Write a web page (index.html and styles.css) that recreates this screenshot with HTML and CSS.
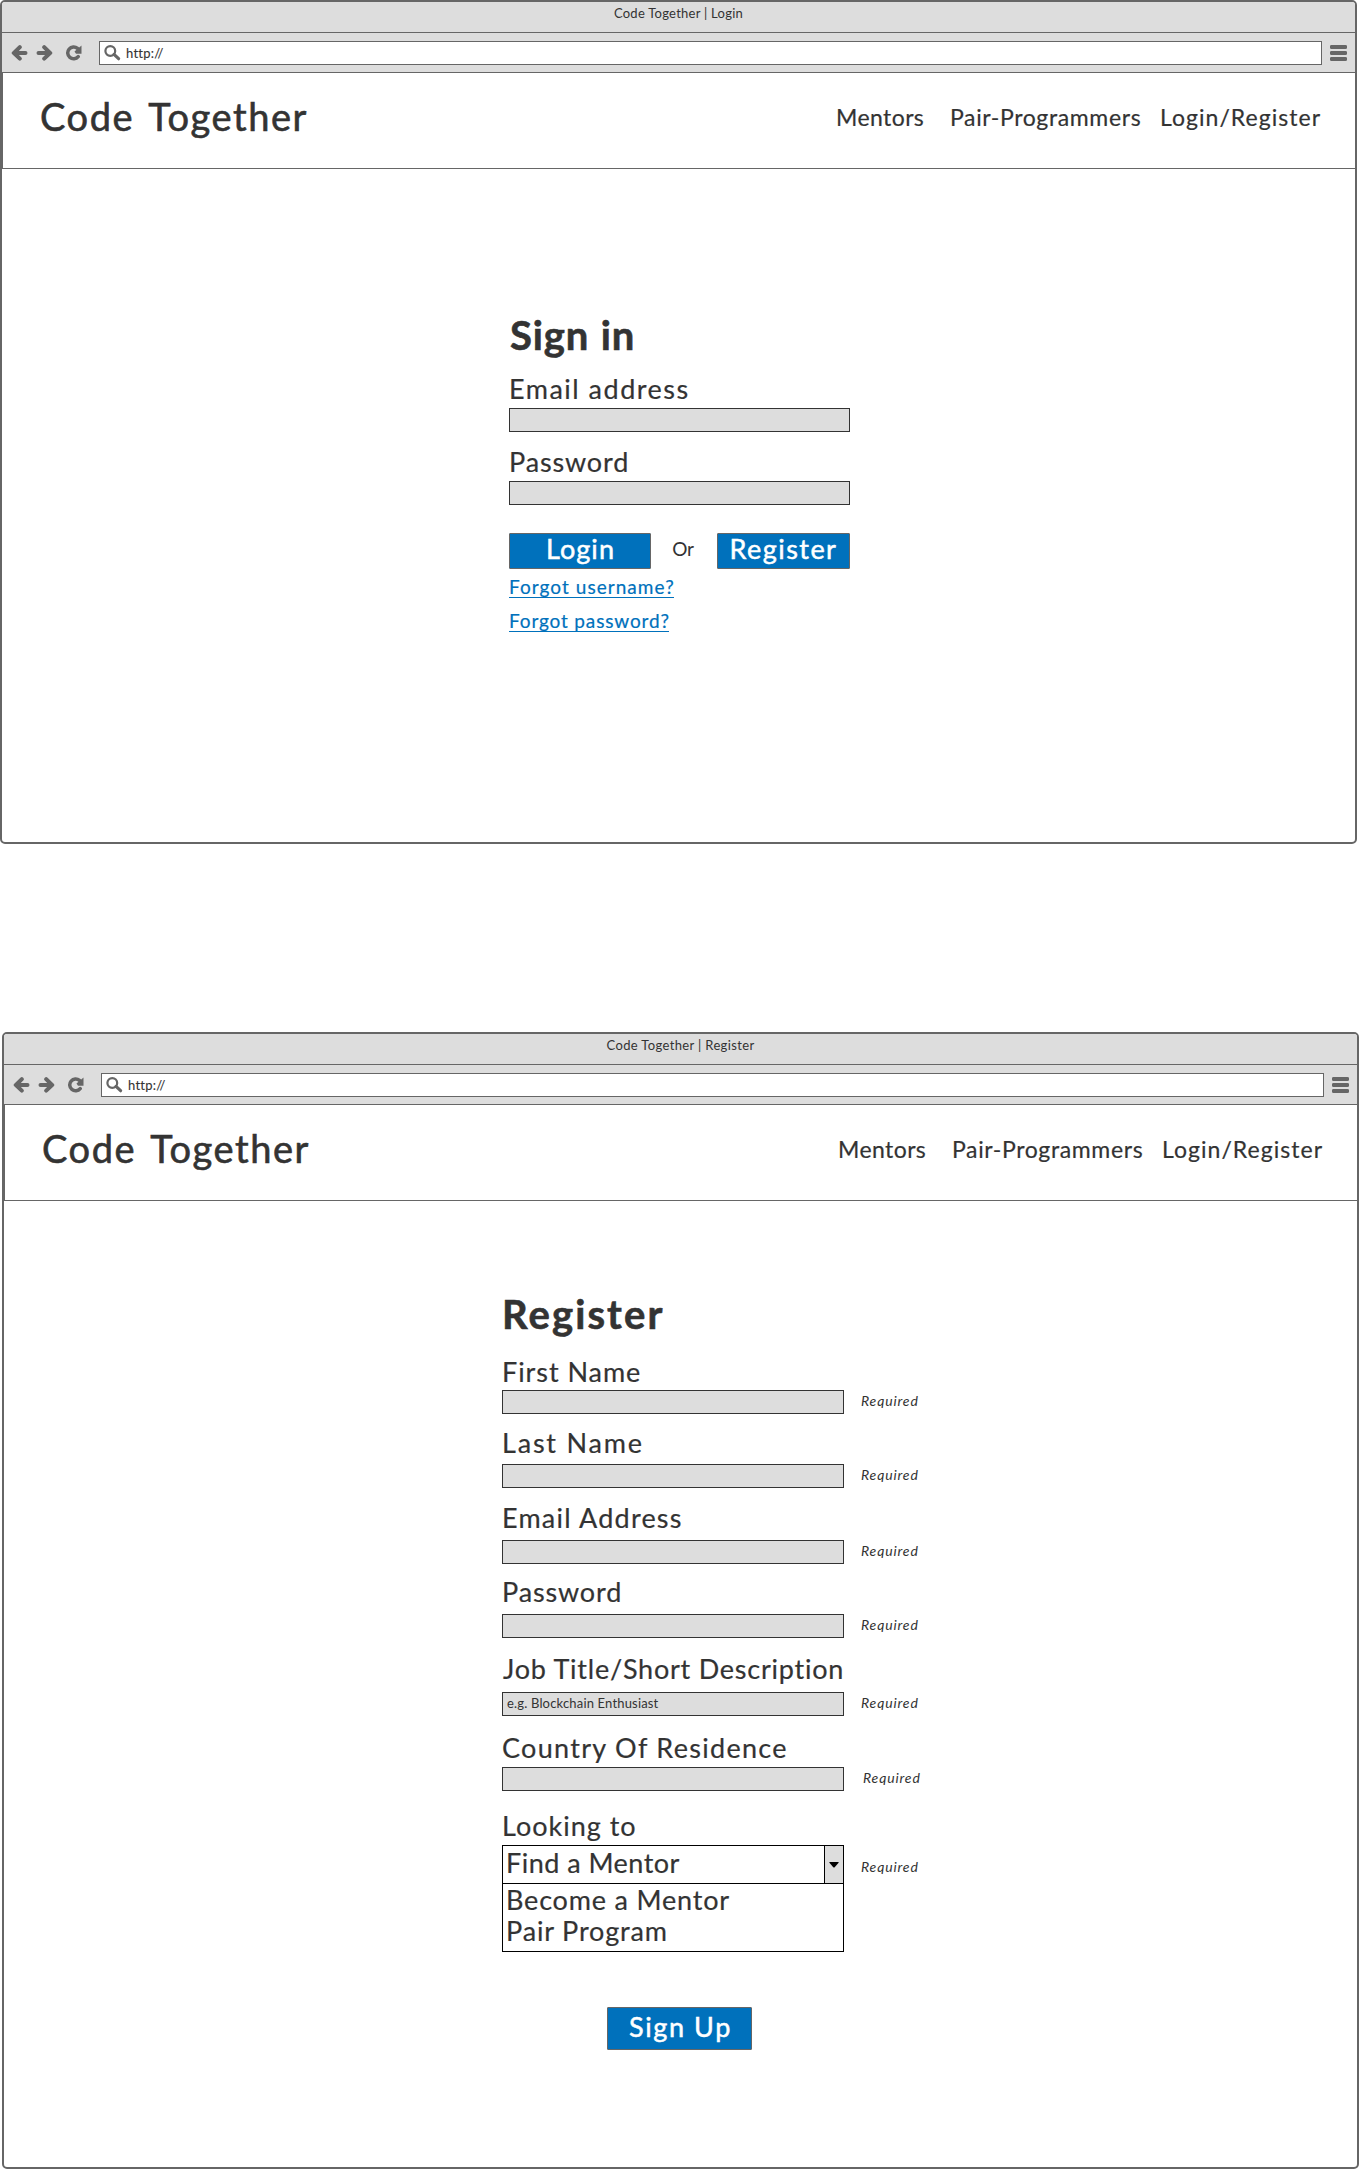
FILE: index.html
```html
<!DOCTYPE html>
<html lang="en">
<head>
<meta charset="utf-8">
<title>Code Together</title>
<link rel="stylesheet" href="styles.css">
</head>
<body>
<svg class="sprite" aria-hidden="true">
  <symbol id="i-back" viewBox="0 0 17 16"><path d="M8.8 2.2 3 8l5.8 5.6M3.5 8h11" fill="none" stroke="currentColor" stroke-width="4" stroke-linecap="round" stroke-linejoin="round"/><path d="M0.3 8 7 2v12z" fill="currentColor"/></symbol>
  <symbol id="i-reload" viewBox="0 0 17 16"><path d="M12.5 3.4A5.9 5.9 0 1 0 13.2 11.6" fill="none" stroke="currentColor" stroke-width="3.5" stroke-linecap="round"/><path d="M16.5.6v8.2H11L9.5 6.5z" fill="currentColor"/></symbol>
  <symbol id="i-search" viewBox="0 0 17 16"><circle cx="6.3" cy="6" r="4.9" fill="none" stroke="currentColor" stroke-width="2.2"/><path d="m10 9.4 4.6 4.3" stroke="currentColor" stroke-width="3.2" stroke-linecap="round"/></symbol>
  <symbol id="i-menu" viewBox="0 0 17 16"><path d="M1.5 2h14M1.5 8h14M1.5 14h14" stroke="currentColor" stroke-width="3.8" stroke-linecap="round"/></symbol>
</svg>

<section class="window window-login">
  <div class="titlebar title-login">Code Together | Login</div>
  <div class="toolbar">
    <svg class="icon back"><use href="#i-back"/></svg>
    <svg class="icon forward"><use href="#i-back"/></svg>
    <svg class="icon reload"><use href="#i-reload"/></svg>
    <div class="url"><svg class="icon"><use href="#i-search"/></svg><span>http://</span></div>
    <svg class="icon menu"><use href="#i-menu"/></svg>
  </div>
  <header class="header">
    <div class="brand">Code Together</div>
    <nav class="nav"><a class="n-mentors">Mentors</a><a class="n-pair">Pair-Programmers</a><a class="n-login">Login/Register</a></nav>
  </header>
  <form class="form signin">
    <h1 class="t-signin">Sign in</h1>
    <div class="field f-mail"><label class="t-mail">Email address</label><div class="row"><div class="input"></div></div></div>
    <div class="field f-pass"><label class="t-pass">Password</label><div class="row"><div class="input"></div></div></div>
    <div class="actions">
      <div class="button b-login">Login</div>
      <span class="or">Or</span>
      <div class="button b-register">Register</div>
    </div>
    <div class="links"><a class="l-user">Forgot username?</a><a class="l-pass">Forgot password?</a></div>
  </form>
</section>

<section class="window window-register">
  <div class="titlebar title-register">Code Together | Register</div>
  <div class="toolbar">
    <svg class="icon back"><use href="#i-back"/></svg>
    <svg class="icon forward"><use href="#i-back"/></svg>
    <svg class="icon reload"><use href="#i-reload"/></svg>
    <div class="url"><svg class="icon"><use href="#i-search"/></svg><span>http://</span></div>
    <svg class="icon menu"><use href="#i-menu"/></svg>
  </div>
  <header class="header">
    <div class="brand">Code Together</div>
    <nav class="nav"><a class="n-mentors">Mentors</a><a class="n-pair">Pair-Programmers</a><a class="n-login">Login/Register</a></nav>
  </header>
  <form class="form register">
    <h1 class="t-register">Register</h1>
    <div class="field r-first"><label>First Name</label><div class="row"><div class="input"></div><em>Required</em></div></div>
    <div class="field r-last"><label>Last Name</label><div class="row"><div class="input"></div><em>Required</em></div></div>
    <div class="field r-mail"><label>Email Address</label><div class="row"><div class="input"></div><em>Required</em></div></div>
    <div class="field r-pass"><label>Password</label><div class="row"><div class="input"></div><em>Required</em></div></div>
    <div class="field r-job"><label>Job Title/Short Description</label><div class="row"><div class="input">e.g. Blockchain Enthusiast</div><em>Required</em></div></div>
    <div class="field r-country"><label>Country Of Residence</label><div class="row"><div class="input"></div><em>Required</em></div></div>
    <div class="field r-looking"><label>Looking to</label>
      <div class="row">
        <div class="select"><span class="o-find">Find a Mentor</span><span class="caret"><svg width="10" height="6" viewBox="0 0 10 6"><path d="M.2.5Q.2 0 1 0h8q.8 0 .8.5L5.7 5.3q-.7.6-1.4 0z"/></svg></span></div>
        <em>Required</em>
      </div>
      <div class="options"><span class="o-become">Become a Mentor</span><span class="o-pair">Pair Program</span></div>
    </div>
    <div class="button b-signup">Sign Up</div>
  </form>
</section>
</body>
</html>
```
FILE: styles.css
```css
* { box-sizing: border-box; }
body {
  margin: 0;
  width: 1359px;
  height: 2169px;
  background: #fff;
  color: #333;
  font: 27px Lato, sans-serif;
  -webkit-text-stroke: .2px currentColor;
  white-space: nowrap;
}
.sprite { display: none; }

.window {
  width: 1357px;
  border: 2px solid #666;
  border-radius: 5px;
  overflow: hidden;
}
.window-login { height: 844px; }
.window-register { height: 1137px; margin: 188px 0 0 2px; }

.titlebar {
  height: 31px;
  border-bottom: 1px solid #666;
  background: #ddd;
  font-size: 13px;
  line-height: 22px;
  text-align: center;
  -webkit-text-stroke-width: 0;
}
.title-login { letter-spacing: .26px; }
.title-register { letter-spacing: .36px; }

.toolbar {
  display: flex;
  height: 40px;
  padding: 8px 8px 0 9px;
  border-bottom: 1px solid #666;
  background: #ddd;
  color: #666;
}
.icon { display: block; flex: none; width: 17px; height: 16px; margin-top: 4px; }
.forward { margin-left: 8px; transform: scaleX(-1); }
.reload { margin-left: 12px; }
.menu { margin-left: 8px; }
.url {
  display: flex;
  flex: 1;
  height: 24px;
  margin-left: 17px;
  padding-left: 4px;
  border: 1px solid #666;
  background: #fff;
}
.url .icon { margin-top: 3px; }
.url span {
  margin-left: 5px;
  color: #333;
  font-size: 13px;
  line-height: 22px;
  letter-spacing: .24px;
  -webkit-text-stroke-width: .1px;
}

.header {
  display: flex;
  justify-content: space-between;
  height: 96px;
  padding: 0 35px 0 37px;
  border-bottom: 1px solid #666;
  border-left: 1px solid #666;
}
.brand {
  font-size: 38px;
  line-height: 86px;
  letter-spacing: 1.55px;
  word-spacing: 4px;
  -webkit-text-stroke-width: .6px;
}
.nav {
  display: grid;
  grid-template-columns: 114px 210px 160px;
  font-size: 23px;
  line-height: 88px;
}
.n-mentors { letter-spacing: .42px; }
.n-pair { letter-spacing: .63px; }
.n-login { letter-spacing: 1.03px; }

h1 { margin: 0; font-size: 40px; line-height: 48px; -webkit-text-stroke-width: .6px; }
.signin { width: 341px; margin: 142px 0 0 507px; }
.register { width: 420px; margin: 89px 0 0 498px; }
.t-signin { letter-spacing: .85px; text-indent: 1px; word-spacing: 1px; }
.t-register { letter-spacing: 2.1px; }

label { display: block; line-height: 32px; }
.field { display: flex; flex-direction: column; gap: 3px; }
.row { display: flex; }
.input {
  width: 341px;
  height: 24px;
  border: 1px solid #333;
  background: #ddd;
}
.register .input {
  width: 342px;
  padding-left: 4px;
  font-size: 13px;
  line-height: 20px;
  letter-spacing: .17px;
  -webkit-text-stroke-width: 0;
}
em {
  margin-left: 17px;
  font-size: 14px;
  line-height: 22px;
  letter-spacing: .85px;
  -webkit-text-stroke-width: 0;
}

.f-mail { margin-top: 14px; }
.t-mail { letter-spacing: 1.5px; }
.f-pass { margin-top: 14px; }
.t-pass { letter-spacing: .85px; }

.r-first { margin-top: 18px; gap: 2px; }
.r-first label { letter-spacing: .95px; }
.r-last { margin-top: 13px; gap: 5px; }
.r-last label { letter-spacing: 1.8px; }
.r-mail { margin-top: 14px; gap: 6px; }
.r-mail label { letter-spacing: 1.22px; }
.r-pass { margin-top: 12px; gap: 6px; }
.r-pass label { letter-spacing: .85px; }
.r-job { margin-top: 15px; gap: 7px; }
.r-job label { letter-spacing: .76px; text-indent: 1px; }
.r-country { margin-top: 16px; }
.r-country label { letter-spacing: 1.3px; }
.r-country em { margin-left: 19px; }
.r-looking { margin-top: 19px; }
.r-looking label { letter-spacing: 1px; }
.r-looking .row { height: 39px; }
.r-looking em { line-height: 44px; }

.select {
  display: flex;
  justify-content: space-between;
  width: 342px;
  height: 39px;
  padding-left: 3px;
  border: 1px solid #000;
  line-height: 33px;
}
.caret {
  display: flex;
  justify-content: center;
  width: 19px;
  padding-top: 16px;
  border-left: 1px solid #000;
  background: #ddd;
}
.options {
  display: flex;
  flex-direction: column;
  width: 342px;
  height: 68px;
  margin-top: -3px;
  padding-left: 3px;
  border: solid #000;
  border-width: 0 1px 1px;
  line-height: 31px;
}
.o-find { letter-spacing: .48px; }
.o-become { letter-spacing: .82px; }
.o-pair { letter-spacing: .85px; }

.button {
  height: 36px;
  border: 1px solid #666;
  border-radius: 1px;
  background: #0071bc;
  color: #fff;
  line-height: 29px;
  text-align: center;
  text-indent: 1px;
  -webkit-text-stroke-width: .5px;
}
.actions { display: flex; justify-content: space-between; margin-top: 28px; }
.b-login { width: 142px; letter-spacing: 1.09px; }
.b-register { width: 133px; letter-spacing: 1.45px; text-indent: 0; }
.or {
  margin-right: 2px;
  font-size: 19px;
  line-height: 31px;
  letter-spacing: -.2px;
  -webkit-text-stroke-width: 0;
}
.b-signup {
  width: 145px;
  height: 43px;
  margin: 55px 0 0 105px;
  line-height: 37px;
  letter-spacing: 1.6px;
  text-indent: 2px;
}

.links { display: flex; flex-direction: column; align-items: flex-start; gap: 12px; margin-top: 7px; }
.links a { height: 22px; border-bottom: 1px solid #0071bc; color: #0071bc; font-size: 19px; line-height: 21px; }
.l-user { width: 165px; letter-spacing: 1.05px; }
.l-pass { width: 160px; letter-spacing: .85px; }
```
